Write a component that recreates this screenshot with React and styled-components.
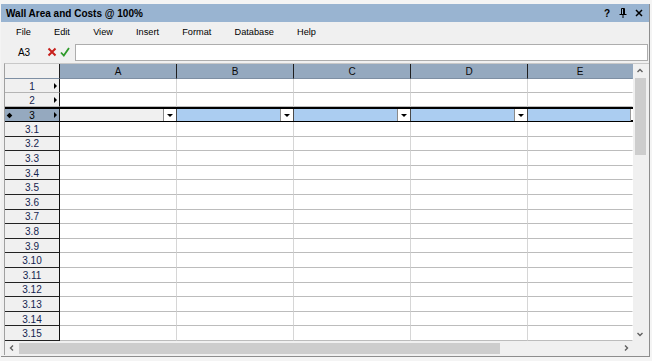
import React from "react";
import styled, { createGlobalStyle } from "styled-components";

const Global = createGlobalStyle`
  html, body { margin: 0; padding: 0; background: #f0f0f0; }
  body { font-family: "Liberation Sans", Arial, sans-serif; }
  * { box-sizing: border-box; }
`;

const Page = styled.div`
  width: 652px;
  height: 361px;
  padding: 4px 0 0 1px;
  background: #f4f4f4;
`;

const Window = styled.div`
  width: 649px;
  height: 353px;
  display: flex;
  flex-direction: column;
  background: #f0f0f0;
  border-right: 1px solid #8d8d8d;
  border-bottom: 1px solid #8d8d8d;
`;

const TitleBar = styled.div`
  height: 18px;
  background: #99b4d1;
  display: flex;
  align-items: center;
  padding: 0 6px 0 5px;
  font-weight: bold;
  font-size: 10px;
  color: #000;
`;

const Title = styled.div`
  flex: 1;
`;

const TitleButtons = styled.div`
  display: flex;
  align-items: center;
  gap: 8px;
  font-size: 10px;
  font-weight: bold;
`;

const TitleBtn = styled.span`
  width: 8px;
  display: flex;
  justify-content: center;
  align-items: center;
`;

const MenuBar = styled.div`
  height: 20px;
  display: flex;
  align-items: center;
  padding-left: 3.5px;
  font-size: 9.2px;
  color: #000;
`;

const MenuItem = styled.span`
  padding: 0 11.6px;
`;

const FormulaBar = styled.div`
  height: 21px;
  display: flex;
  align-items: center;
  padding-bottom: 1px;
`;

const CellRef = styled.div`
  width: 44px;
  text-align: center;
  font-size: 10px;
  padding-left: 2px;
`;

const FormulaIcon = styled.span`
  width: 13px;
  display: flex;
  justify-content: center;
  align-items: center;
`;

const FormulaInput = styled.div`
  margin-left: 4px;
  width: 573px;
  height: 17px;
  background: #fff;
  border: 1px solid #adadad;
`;

const Sheet = styled.div`
  margin-left: 3px;
  display: flex;
  flex-direction: column;
  border-left: 1px solid #a0a0a0;
  border-top: 1px solid #c8c8c8;
`;

const SheetBody = styled.div`
  display: flex;
  height: 277px;
`;

const Table = styled.div`
  width: 628px;
  display: flex;
  flex-direction: column;
  overflow: hidden;
  background: #fff;
`;

const Row = styled.div`
  display: grid;
  grid-template-columns: 55px 117px 117px 117px 117px 105px;
  height: ${(p) => p.$h}px;
  flex: none;
  ${(p) =>
    p.$selected &&
    `border-top: 2px solid #000; border-bottom: 2px solid #000;`}
`;

const ColHeader = styled.div`
  background: ${(p) => (p.$corner ? "#f0f0f0" : "#95a9bf")};
  border-right: 1px solid ${(p) => (p.$last ? "#95a9bf" : "#1e1e1e")};
  border-bottom: 1px solid #7e8fa3;
  font-size: 10px;
  display: flex;
  align-items: center;
  justify-content: center;
  color: #0a0a0a;
`;

const RowHeader = styled.div`
  position: relative;
  background: ${(p) => (p.$selected ? "#95a9bf" : "#f0f0f0")};
  border-right: 1px solid #111;
  border-bottom: ${(p) => (p.$selected ? "none" : `1px solid ${p.$dark ? "#222" : "#b4b4b4"}`)};
  font-size: 10px;
  color: ${(p) => (p.$selected ? "#000" : "#14244f")};
  display: flex;
  align-items: center;
  justify-content: center;
  padding-top: 1px;
`;

const Marker = styled.span`
  position: absolute;
  right: 2px;
  top: 50%;
  margin-top: -3px;
  width: 0;
  height: 0;
  border-top: 3px solid transparent;
  border-bottom: 3px solid transparent;
  border-left: 3px solid #000;
`;

const Bullet = styled.span`
  position: absolute;
  left: 2px;
  top: 50%;
  margin-top: -2.5px;
  width: 5px;
  height: 5px;
  background: #000;
  transform: rotate(45deg) scale(0.8);
`;

const Cell = styled.div`
  background: #fff;
  border-right: 1px solid ${(p) => (p.$last ? "#fff" : "#d6d6d6")};
  border-bottom: 1px solid #bcbcbc;
`;

const SelCell = styled.div`
  display: flex;
  background: ${(p) => (p.$active ? "#f0f0f0" : "#abcdf1")};
  border-right: 1px solid ${(p) => (p.$last ? "#9a9a9a" : "#4a4a4a")};
  margin-right: ${(p) => (p.$last ? "2px" : "0")};
`;

const DropBtn = styled.div`
  margin-left: auto;
  width: 13px;
  background: #fff;
  border-left: 1px solid #8a8a8a;
  display: flex;
  align-items: center;
  justify-content: center;
  &::after {
    content: "";
    width: 0;
    height: 0;
    border-left: 3px solid transparent;
    border-right: 3px solid transparent;
    border-top: 3px solid #000;
  }
`;

const VScroll = styled.div`
  width: 14px;
  background: #f0f0f0;
  display: flex;
  flex-direction: column;
  align-items: center;
`;

const ArrowBox = styled.div`
  width: 14px;
  height: 14px;
  flex: none;
  display: flex;
  align-items: center;
  justify-content: center;
`;

const VThumb = styled.div`
  width: 11px;
  height: 77px;
  background: #cdcdcd;
`;

const Spacer = styled.div`
  flex: 1;
`;

const HScrollRow = styled.div`
  display: flex;
  height: 14px;
`;

const HScroll = styled.div`
  width: 628px;
  background: #f0f0f0;
  display: flex;
  align-items: center;
`;

const HThumb = styled.div`
  width: 481px;
  height: 11px;
  background: #cdcdcd;
`;

const Corner = styled.div`
  width: 14px;
  background: #f0f0f0;
`;

const Chevron = ({ dir }) => {
  const paths = {
    up: "M1.5 5 L4 2.5 L6.5 5",
    down: "M1.5 3 L4 5.5 L6.5 3",
    left: "M5 1.5 L2.5 4 L5 6.5",
    right: "M3 1.5 L5.5 4 L3 6.5",
  };
  return (
    <svg width="8" height="8" viewBox="0 0 8 8">
      <path d={paths[dir]} fill="none" stroke="#606060" strokeWidth="1.4" />
    </svg>
  );
};

const PinIcon = () => (
  <svg width="8" height="10" viewBox="0 0 8 10">
    <path d="M2.5 0.5 H5.5 V6 M2.5 0.5 V6 M0.5 6.5 H7.5 M4 6.5 V10" fill="none" stroke="#000" strokeWidth="1" />
    <path d="M4.5 1 V6" stroke="#000" strokeWidth="1" />
  </svg>
);

const CloseIcon = () => (
  <svg width="8" height="8" viewBox="0 0 8 8">
    <path d="M1 1 L7 7 M7 1 L1 7" stroke="#000" strokeWidth="1.5" />
  </svg>
);

const RedX = () => (
  <svg width="10" height="10" viewBox="0 0 10 10">
    <path d="M1.5 1.5 L8.5 8.5 M8.5 1.5 L1.5 8.5" stroke="#c8201c" strokeWidth="2" />
  </svg>
);

const GreenCheck = () => (
  <svg width="10" height="10" viewBox="0 0 10 10">
    <path d="M1 5.5 L3.8 8.5 L9 1" fill="none" stroke="#2e9a2a" strokeWidth="1.8" />
  </svg>
);

const menus = ["File", "Edit", "View", "Insert", "Format", "Database", "Help"];
const cols = ["A", "B", "C", "D", "E"];
const subRows = Array.from({ length: 15 }, (_, i) => `3.${i + 1}`);

export default function App() {
  return (
    <>
      <Global />
      <Page>
        <Window>
          <TitleBar>
            <Title>Wall Area and Costs @ 100%</Title>
            <TitleButtons>
              <TitleBtn>?</TitleBtn>
              <TitleBtn>
                <PinIcon />
              </TitleBtn>
              <TitleBtn>
                <CloseIcon />
              </TitleBtn>
            </TitleButtons>
          </TitleBar>
          <MenuBar>
            {menus.map((m) => (
              <MenuItem key={m}>{m}</MenuItem>
            ))}
          </MenuBar>
          <FormulaBar>
            <CellRef>A3</CellRef>
            <FormulaIcon>
              <RedX />
            </FormulaIcon>
            <FormulaIcon>
              <GreenCheck />
            </FormulaIcon>
            <FormulaInput />
          </FormulaBar>
          <Sheet>
            <SheetBody>
              <Table>
                <Row $h={15}>
                  <ColHeader $corner />
                  {cols.map((c, i) => (
                    <ColHeader key={c} $last={i === cols.length - 1}>
                      {c}
                    </ColHeader>
                  ))}
                </Row>
                {["1", "2"].map((r) => (
                  <Row key={r} $h={14}>
                    <RowHeader>
                      {r}
                      <Marker />
                    </RowHeader>
                    {cols.map((c, i) => (
                      <Cell key={c} $last={i === cols.length - 1} />
                    ))}
                  </Row>
                ))}
                <Row $h={15} $selected>
                  <RowHeader $selected>
                    <Bullet />
                    3
                    <Marker />
                  </RowHeader>
                  {cols.map((c, i) => (
                    <SelCell key={c} $active={i === 0} $last={i === cols.length - 1}>
                      {i < cols.length - 1 && <DropBtn />}
                    </SelCell>
                  ))}
                </Row>
                {subRows.map((r) => (
                  <Row key={r} $h={14.6}>
                    <RowHeader $dark>{r}</RowHeader>
                    {cols.map((c, i) => (
                      <Cell key={c} $last={i === cols.length - 1} />
                    ))}
                  </Row>
                ))}
              </Table>
              <VScroll>
                <ArrowBox>
                  <Chevron dir="up" />
                </ArrowBox>
                <VThumb />
                <Spacer />
                <ArrowBox>
                  <Chevron dir="down" />
                </ArrowBox>
              </VScroll>
            </SheetBody>
            <HScrollRow>
              <HScroll>
                <ArrowBox>
                  <Chevron dir="left" />
                </ArrowBox>
                <HThumb />
                <Spacer />
                <ArrowBox>
                  <Chevron dir="right" />
                </ArrowBox>
              </HScroll>
              <Corner />
            </HScrollRow>
          </Sheet>
        </Window>
      </Page>
    </>
  );
}
